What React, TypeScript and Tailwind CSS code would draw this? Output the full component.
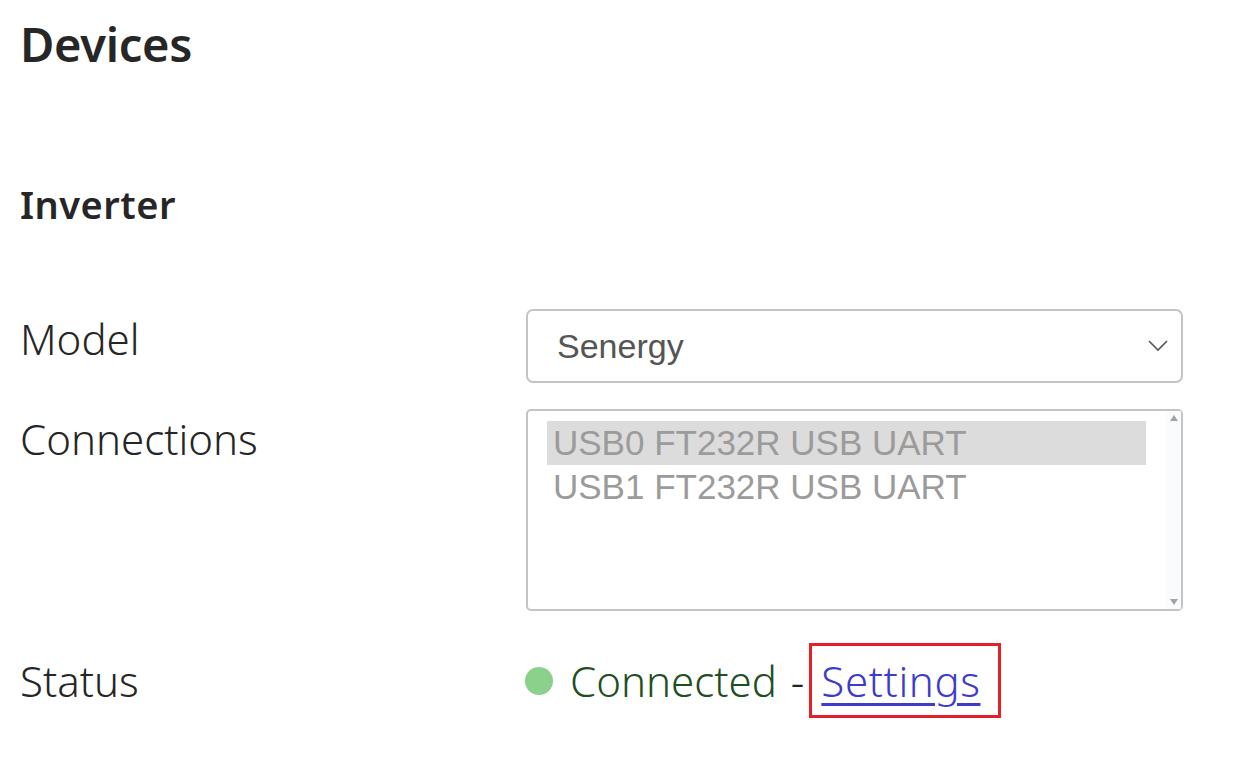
import React from "react";

const labelFont = { fontFamily: '"Noto Sans", "Open Sans", sans-serif' };
const arial = { fontFamily: '"Liberation Sans", Arial, sans-serif' };

const App = () => {
  return (
    <div className="min-h-screen bg-white pl-5 pr-[72px] pt-[12px] text-[#262626]" style={labelFont}>
      <h1 className="text-[47px] font-semibold leading-[64px] tracking-[-0.3px]">Devices</h1>

      <h2 className="mt-[103px] text-[38px] font-semibold leading-[50px] tracking-[0.5px]">Inverter</h2>

      <div className="mt-[80px] grid grid-cols-[506px_1fr] gap-y-[26px]">
        {/* Model */}
        <div className="pt-[2px] text-[42px] font-light leading-[56px]">Model</div>
        <div className="flex h-[74px] items-center justify-between rounded-[7px] border-2 border-[#c4c4c4] pl-[29px] pr-[12px]">
          <span className="text-[34px] text-[#555]" style={arial}>
            Senergy
          </span>
          <svg width="22" height="14" viewBox="0 0 22 14" fill="none">
            <path d="M2 2l9 9 9-9" stroke="#555" strokeWidth="1.6" />
          </svg>
        </div>

        {/* Connections */}
        <div className="pt-[2px] text-[42px] font-light leading-[56px]">Connections</div>
        <div className="flex h-[202px] rounded-[5px] border-2 border-[#c4c4c4]">
          <div className="flex-1 pl-[19px] pt-[10px] text-[35px] leading-[44px] text-[#9b9b9b]" style={arial}>
            <div className="w-[599px] bg-[#dcdcdc] pl-[6px]">USB0 FT232R USB UART</div>
            <div className="pl-[6px]">USB1 FT232R USB UART</div>
          </div>
          <div className="flex w-[15px] flex-col items-center justify-between bg-[#fafbfd] py-[4px]">
            <svg width="8" height="6" viewBox="0 0 8 6">
              <path d="M4 0L8 6H0z" fill="#a3a3a3" />
            </svg>
            <svg width="8" height="6" viewBox="0 0 8 6">
              <path d="M0 0h8L4 6z" fill="#a3a3a3" />
            </svg>
          </div>
        </div>

        {/* Status */}
        <div className="mt-[6px] flex h-[75px] items-center text-[42px] font-light">Status</div>
        <div className="mt-[6px] flex h-[75px] items-center">
          <span className="ml-[-1px] h-[28px] w-[28px] rounded-full bg-[#8bd18b]" />
          <span className="ml-[17px] text-[42px] font-light text-[#1f4f1f]">Connected</span>
          <span className="ml-[14px] text-[42px] font-light text-[#222]">-</span>
          <span className="ml-[5px] flex h-[75px] items-center border-[3px] border-[#e51e28] pl-[9px] pr-[17px]">
            <a
              href="#"
              className="text-[42px] font-light tracking-[0.6px] text-[#3b3bd0] underline decoration-[3px] underline-offset-[6px]"
            >
              Settings
            </a>
          </span>
        </div>
      </div>
    </div>
  );
};

export default App;
